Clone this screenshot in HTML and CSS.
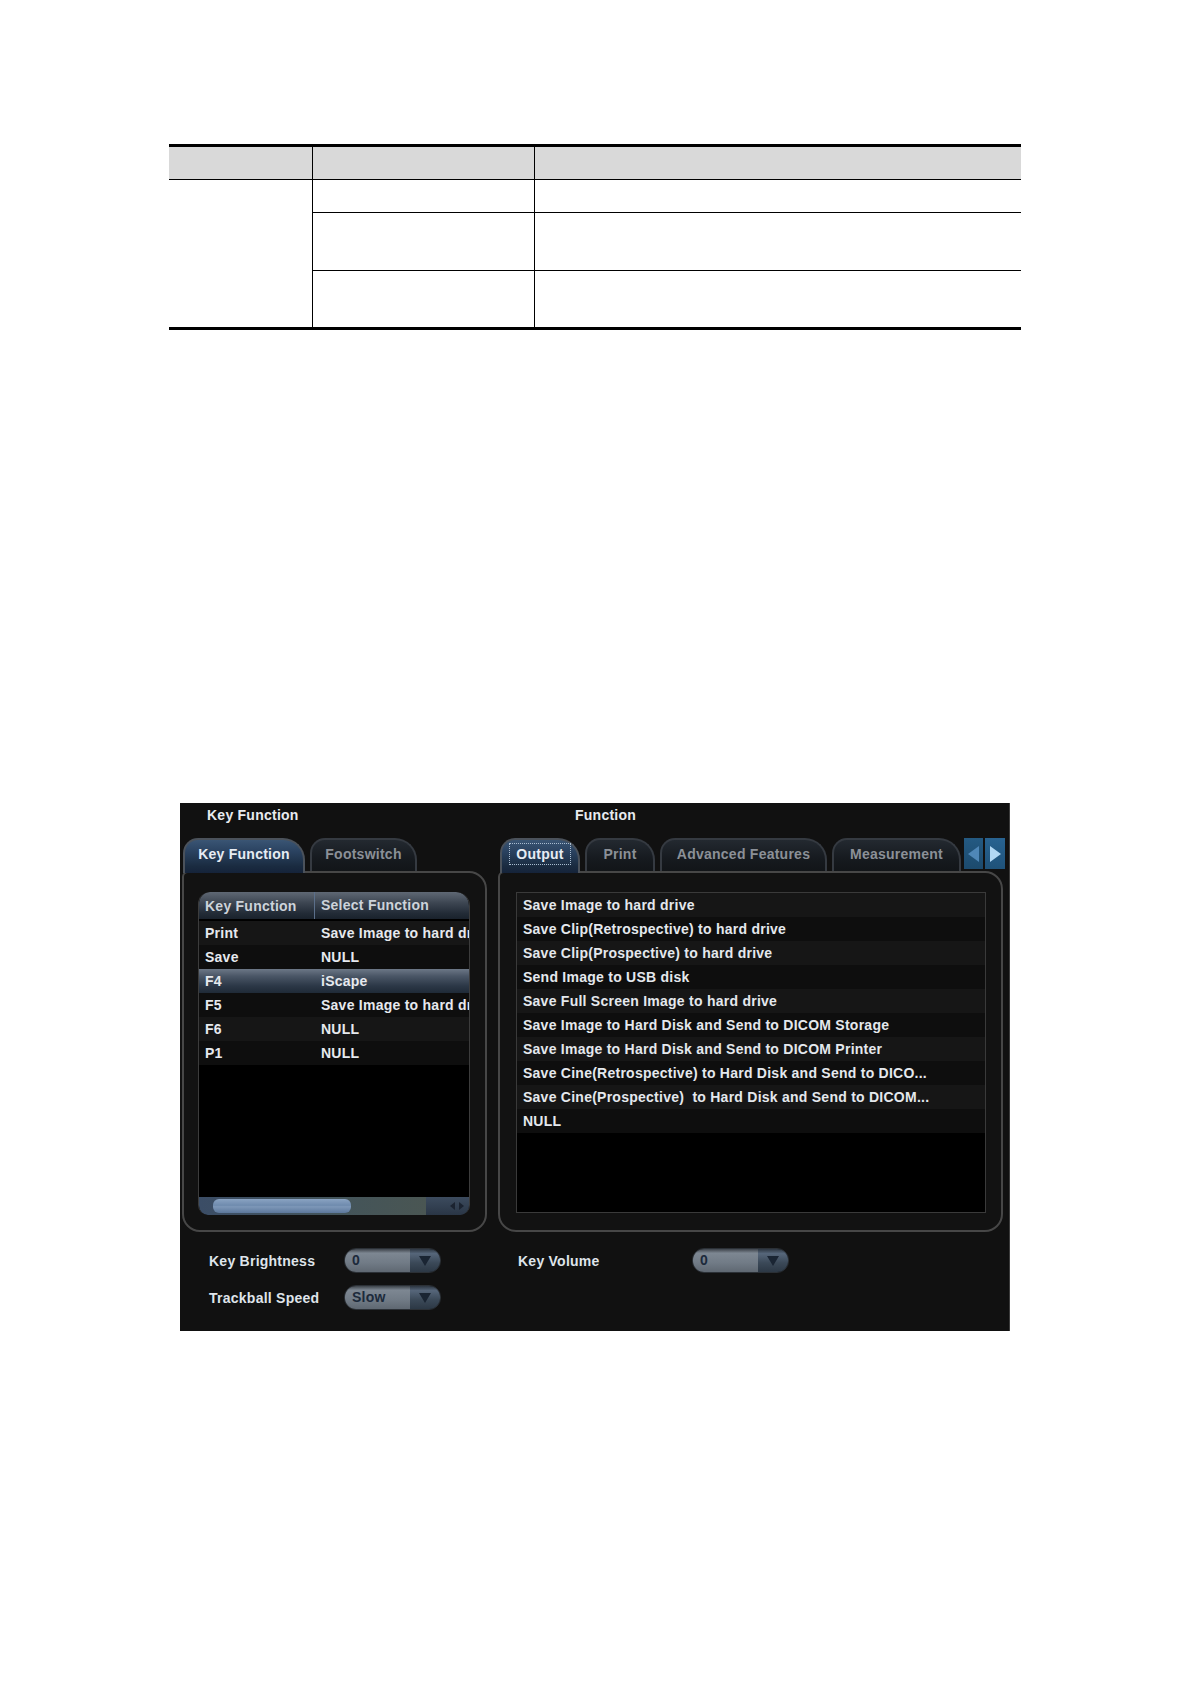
FILE: index.html
```html
<!DOCTYPE html>
<html>
<head>
<meta charset="utf-8">
<title>Key Function</title>
<link rel="stylesheet" href="styles.css">
</head>
<body>
<div class="page">
  <table class="spec">
    <tr class="hd"><th class="c1"></th><th class="c2"></th><th class="c3"></th></tr>
    <tr class="r1"><td class="c1" rowspan="3"></td><td class="c2 line"></td><td class="c3 line"></td></tr>
    <tr class="r2"><td class="c2 line"></td><td class="c3 line"></td></tr>
    <tr class="r3"><td class="c2"></td><td class="c3"></td></tr>
  </table>

  <div class="panel">
    <div class="col col-left">
      <div class="title">Key Function</div>
      <div class="tabs">
        <div class="tab active">Key Function</div>
        <div class="tab w-foot">Footswitch</div>
      </div>
      <div class="box box-left">
        <div class="klist">
          <div class="khead"><span class="kc1">Key Function</span><span class="kc2">Select Function</span></div>
          <div class="krows">
            <div class="krow"><span class="kc1">Print</span><span class="kc2">Save Image to hard drive</span></div>
            <div class="krow"><span class="kc1">Save</span><span class="kc2">NULL</span></div>
            <div class="krow sel"><span class="kc1">F4</span><span class="kc2">iScape</span></div>
            <div class="krow"><span class="kc1">F5</span><span class="kc2">Save Image to hard drive</span></div>
            <div class="krow"><span class="kc1">F6</span><span class="kc2">NULL</span></div>
            <div class="krow"><span class="kc1">P1</span><span class="kc2">NULL</span></div>
          </div>
          <div class="hscroll">
            <div class="track"><div class="thumb"></div></div>
            <div class="sarrows"><span class="sa sa-l"></span><span class="sa sa-r"></span></div>
          </div>
        </div>
      </div>
    </div>

    <div class="col col-right">
      <div class="title title-fn">Function</div>
      <div class="tabs tabs-right">
        <div class="tab active w-out"><span class="focus">Output</span></div>
        <div class="tab w-print">Print</div>
        <div class="tab w-adv">Advanced Features</div>
        <div class="tab w-meas">Measurement</div>
        <div class="arrow arrow-l"><span class="tri tri-l"></span></div>
        <div class="arrow arrow-r"><span class="tri tri-r"></span></div>
      </div>
      <div class="box box-right">
        <div class="flist">
          <div class="frow sel">Save Image to hard drive</div>
          <div class="frow">Save Clip(Retrospective) to hard drive</div>
          <div class="frow">Save Clip(Prospective) to hard drive</div>
          <div class="frow">Send Image to USB disk</div>
          <div class="frow">Save Full Screen Image to hard drive</div>
          <div class="frow">Save Image to Hard Disk and Send to DICOM Storage</div>
          <div class="frow">Save Image to Hard Disk and Send to DICOM Printer</div>
          <div class="frow">Save Cine(Retrospective) to Hard Disk and Send to DICO...</div>
          <div class="frow">Save Cine(Prospective)&nbsp; to Hard Disk and Send to DICOM...</div>
          <div class="frow">NULL</div>
        </div>
      </div>
    </div>

    <div class="controls">
      <div class="clabel">Key Brightness</div>
      <div class="dd"><span class="dd-val">0</span><span class="dd-btn"><span class="dd-tri"></span></span></div>
      <div class="cspace"></div>
      <div class="clabel">Key Volume</div>
      <div class="dd"><span class="dd-val">0</span><span class="dd-btn"><span class="dd-tri"></span></span></div>

      <div class="clabel">Trackball Speed</div>
      <div class="dd"><span class="dd-val">Slow</span><span class="dd-btn"><span class="dd-tri"></span></span></div>
    </div>
  </div>
</div>
</body>
</html>
```

FILE: styles.css
```css
html, body {
  margin: 0;
  padding: 0;
  background: #ffffff;
}

.page {
  width: 1190px;
  height: 1684px;
  overflow: hidden;
}

/* ---------- document table ---------- */
.spec {
  margin: 144px 0 0 169px;
  width: 852px;
  border-spacing: 0;
  border-top: 3px solid #000;
  border-bottom: 3px solid #000;
  table-layout: fixed;
}

.spec th,
.spec td {
  padding: 0;
  box-sizing: border-box;
}

.spec th {
  background: #d9d9d9;
  height: 33px;
  border-bottom: 1px solid #000;
}

.spec .c1 { width: 143px; }
.spec .c2 { width: 222px; border-left: 1px solid #000; }
.spec .c3 { border-left: 1px solid #000; }

.spec td.line { border-bottom: 1px solid #000; }
.spec .r1 td { height: 33px; }
.spec .r2 td { height: 58px; }
.spec .r3 td { height: 56px; }

/* ---------- dark panel ---------- */
.panel {
  margin: 473px 0 0 180px;
  width: 830px;
  height: 528px;
  box-sizing: border-box;
  background: #111111;
  border-right: 1px solid #3c3c3c;
  padding-left: 2px;
  display: grid;
  grid-template-columns: 305px 508px;
  column-gap: 11px;
  align-content: start;
  font-family: "Liberation Sans", Arial, sans-serif;
  font-weight: bold;
  font-size: 14px;
  letter-spacing: 0.25px;
  color: #e2e6ec;
}

.col {
  display: flex;
  flex-direction: column;
}

.title {
  height: 35px;
  line-height: 24px;
  padding-left: 25px;
  color: #e8ebef;
}

.title-fn { padding-left: 77px; }

.tabs {
  display: flex;
  align-items: flex-start;
  gap: 5px;
  height: 35px;
  margin-bottom: -2px;
  margin-left: 1px;
  position: relative;
  z-index: 1;
}

.tabs-right { margin-left: 2px; }

.tab {
  box-sizing: border-box;
  height: 33px;
  border: 2px solid #353a41;
  border-bottom: none;
  border-radius: 15px 22px 0 0;
  background: linear-gradient(#232930, #161a1f 60%, #121518);
  color: #8b9097;
  display: flex;
  align-items: center;
  justify-content: center;
  white-space: nowrap;
  width: 107px;
  padding-bottom: 3px;
}

.tab.active {
  height: 35px;
  width: 122px;
  border-color: #4b525b;
  background: linear-gradient(#3a5574, #2a4260 35%, #1a2b40 80%, #15233a);
  color: #e6ecf3;
  padding-bottom: 5px;
}

.w-out.active { width: 80px; }
.w-print { width: 70px; }
.w-adv { width: 167px; }
.w-meas { width: 129px; margin-right: -2px; }

.focus {
  border: 1px dotted #a9bcd0;
  padding: 2px 6px 2px 6px;
}

.arrow {
  width: 19px;
  height: 31px;
  background: linear-gradient(#245a82, #1c4a6d);
  display: flex;
  align-items: center;
  justify-content: center;
}

.arrow-l { margin-left: 0; }
.arrow-r { width: 20px; margin-left: -3px; background: linear-gradient(#286391, #1f5279); }

.tri {
  width: 0;
  height: 0;
  border-top: 8px solid transparent;
  border-bottom: 8px solid transparent;
}

.tri-l { border-right: 11px solid #4f87b7; }
.tri-r { border-left: 11px solid #b2d8f4; }

/* ---------- group boxes ---------- */
.box {
  box-sizing: border-box;
  height: 361px;
  border: 2px solid #474747;
  border-radius: 6px 18px 18px 18px;
  background: #121212;
}

.box-left {
  padding: 19px 15px 15px 14px;
}

.box-right {
  width: 505px;
  padding: 19px 15px 17px 16px;
}

/* ---------- key list ---------- */
.klist {
  box-sizing: border-box;
  width: 272px;
  height: 323px;
  background: #000;
  border-left: 1px solid #3c3c3c;
  border-right: 1px solid #3c3c3c;
  display: flex;
  flex-direction: column;
  overflow: hidden;
  border-radius: 12px 14px 10px 10px;
}

.khead {
  height: 27px;
  display: flex;
  align-items: center;
  background: linear-gradient(#5f6874, #3d4652 40%, #222b36 80%, #1a222c);
  color: #cdd3da;
  border-radius: 11px 13px 0 0;
  margin-bottom: 2px;
}

.kc1 {
  width: 115px;
  flex: none;
  box-sizing: border-box;
  padding-left: 6px;
  white-space: nowrap;
  overflow: hidden;
}

.kc2 {
  flex: 1;
  box-sizing: border-box;
  padding-left: 7px;
  white-space: nowrap;
  overflow: hidden;
}

.khead .kc2 {
  border-left: 1px solid #5b6f8a;
  height: 27px;
  line-height: 27px;
  padding-left: 6px;
}

.krow {
  height: 24px;
  line-height: 24px;
  display: flex;
  background: #0e0e0e;
  color: #e6e9ee;
}

.krow:nth-child(odd) { background: #161616; }

.krow.sel,
.frow.sel {
  background: linear-gradient(#6c7786, #4a5666 30%, #2c3847 70%, #1f2a37);
}

.hscroll {
  margin-top: auto;
  height: 18px;
  display: flex;
  background: linear-gradient(#3a4a5e, #2a3748);
  border-radius: 0 0 9px 9px;
}

.track {
  flex: 1;
  position: relative;
  background: linear-gradient(90deg, #3b4d66, #43545a 60%, #4a5653);
  border-radius: 0 0 0 9px;
}

.thumb {
  position: absolute;
  left: 14px;
  top: 2px;
  width: 138px;
  height: 14px;
  border-radius: 6px;
  background: linear-gradient(#8aa3c2, #6f8bae 45%, #7d97b8 55%, #5c779b);
}

.sarrows {
  width: 38px;
  display: flex;
  align-items: center;
  justify-content: flex-end;
  gap: 4px;
  padding-right: 5px;
  background: linear-gradient(#3c4b5e, #2a3646);
}

.sa {
  width: 0;
  height: 0;
  border-top: 4px solid transparent;
  border-bottom: 4px solid transparent;
}

.sa-l { border-right: 5px solid #1b2330; }
.sa-r { border-left: 5px solid #1b2330; }

/* ---------- function list ---------- */
.flist {
  box-sizing: border-box;
  width: 470px;
  height: 321px;
  background: #000;
  border: 1px solid #3a3a3a;
}

.frow {
  height: 24px;
  line-height: 24px;
  padding-left: 6px;
  white-space: nowrap;
  overflow: hidden;
  background: #0e0e0e;
  color: #e4e8ed;
}

.frow:nth-child(odd) { background: #161616; }

/* ---------- bottom controls ---------- */
.controls {
  grid-column: 1 / -1;
  display: grid;
  grid-template-columns: 135px 97px 77px 174px 97px;
  grid-auto-rows: 25px;
  row-gap: 12px;
  padding-left: 27px;
  margin-top: 16px;
  align-items: center;
}

.clabel {
  color: #dfe4ea;
  white-space: nowrap;
}

.dd {
  box-sizing: border-box;
  width: 97px;
  height: 25px;
  border-radius: 12px;
  overflow: hidden;
  display: flex;
  border: 1px solid #2b3036;
  box-shadow: inset 0 2px 2px rgba(0, 0, 0, 0.6);
}

.dd-val {
  flex: 1;
  padding-left: 7px;
  line-height: 23px;
  font-size: 14px;
  color: #1c2a3b;
  background: linear-gradient(#3d434a, #7d8792 18%, #717b86 60%, #5f6872);
}

.dd-btn {
  width: 30px;
  display: flex;
  align-items: center;
  justify-content: center;
  background: linear-gradient(#2c3540, #56667a 20%, #3b4958 60%, #2c3845);
}

.dd-tri {
  width: 0;
  height: 0;
  border-left: 6px solid transparent;
  border-right: 6px solid transparent;
  border-top: 10px solid #1a2533;
}
```
